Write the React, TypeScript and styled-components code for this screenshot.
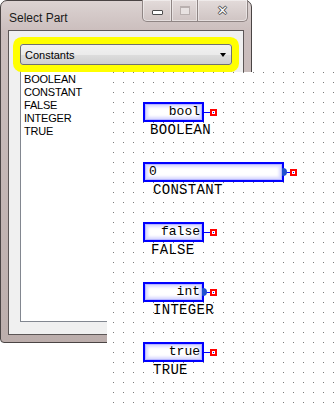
import React from 'react';
import styled, {createGlobalStyle} from "styled-components";

const GlobalStyle = createGlobalStyle`
    html, body {
        margin: 0;
        padding: 0;
        background: #ffffff;
    }
`;

type PartProps = {
    value: string;
    label: string;
    width: number;
    align: "left" | "right";
    labelOffset: number;
    blob?: boolean;
};

const parts: PartProps[] = [
    {value: "bool", label: "BOOLEAN", width: 61, align: "right", labelOffset: 7},
    {value: "0", label: "CONSTANT", width: 141, align: "left", labelOffset: 10, blob: true},
    {value: "false", label: "FALSE", width: 61, align: "right", labelOffset: 8},
    {value: "int", label: "INTEGER", width: 61, align: "right", labelOffset: 10, blob: true},
    {value: "true", label: "TRUE", width: 61, align: "right", labelOffset: 10},
];

const listItems = ["BOOLEAN", "CONSTANT", "FALSE", "INTEGER", "TRUE"];

export default function App() {
    return (
        <StyledPage>
            <GlobalStyle/>
            <StyledWindow>
                <StyledTitleBar>
                    <StyledTitle>Select Part</StyledTitle>
                    <StyledCaptionButtons>
                        <StyledCaptionButton width={30}>
                            <StyledMinGlyph/>
                        </StyledCaptionButton>
                        <StyledCaptionButton width={27}>
                            <StyledMaxGlyph/>
                        </StyledCaptionButton>
                        <StyledCaptionButton width={51}>
                            <StyledCloseGlyph>✕</StyledCloseGlyph>
                        </StyledCaptionButton>
                    </StyledCaptionButtons>
                </StyledTitleBar>
                <StyledClient>
                    <StyledCombo>
                        <span>Constants</span>
                        <StyledArrow/>
                    </StyledCombo>
                    <StyledList>
                        {listItems.map(item => <StyledListItem key={item}>{item}</StyledListItem>)}
                    </StyledList>
                </StyledClient>
            </StyledWindow>

            <StyledCanvas>
                {parts.map(p => (
                    <StyledPart key={p.label}>
                        <StyledPartRow>
                            <StyledPartBox width={p.width} align={p.align}>{p.value}</StyledPartBox>
                            <StyledWire>
                                {p.blob && <StyledBlob/>}
                            </StyledWire>
                            <StyledPin/>
                        </StyledPartRow>
                        <StyledPartLabel offset={p.labelOffset}>{p.label}</StyledPartLabel>
                    </StyledPart>
                ))}
            </StyledCanvas>
        </StyledPage>
    );
}

const StyledPage = styled.div`
    position: relative;
    width: 334px;
    height: 403px;
    overflow: hidden;
    background: #ffffff;
`;

const StyledWindow = styled.div`
    box-sizing: border-box;
    width: 252px;
    height: 343px;
    border: 1px solid #4a4444;
    border-radius: 7px 7px 4px 4px;
    background: linear-gradient(180deg, #dcd3d2 0px, #cbbebd 30px, #bcaeac 100%);
    display: flex;
    flex-direction: column;
    padding: 0 7px 7px 7px;
`;

const StyledTitleBar = styled.div`
    height: 29px;
    display: flex;
    align-items: flex-start;
    justify-content: space-between;
`;

const StyledTitle = styled.div`
    font-family: "Liberation Sans", Arial, sans-serif;
    font-size: 12px;
    color: #1a1a1a;
    padding-top: 10px;
    padding-left: 1px;
`;

const StyledCaptionButtons = styled.div`
    display: flex;
    margin-right: -4px;
    margin-top: -1px;
`;

const StyledCaptionButton = styled.div<{ width: number }>`
    box-sizing: border-box;
    width: ${p => p.width}px;
    height: 22px;
    border: 1px solid #8f8584;
    border-top: none;
    margin-left: -1px;
    background: linear-gradient(180deg, #e3dbda 0%, #cfc4c3 100%);
    box-shadow: inset 0 0 0 1px rgba(255, 255, 255, 0.45);
    display: flex;
    align-items: center;
    justify-content: center;

    &:first-child {
        border-bottom-left-radius: 5px;
    }

    &:last-child {
        border-bottom-right-radius: 5px;
    }
`;

const StyledMinGlyph = styled.div`
    width: 9px;
    height: 3px;
    margin-top: 3px;
    background: #ffffff;
    border: 1px solid #4d4d4d;
    border-radius: 1px;
`;

const StyledMaxGlyph = styled.div`
    width: 8px;
    height: 6px;
    border: 1px solid #b9b0af;
    border-top-width: 2px;
    background: #e8e2e1;
`;

const StyledCloseGlyph = styled.div`
    font-family: "DejaVu Sans", sans-serif;
    font-size: 13px;
    font-weight: bold;
    color: #ffffff;
    line-height: 1;
    text-shadow: 1px 0 0 #4d4d4d, -1px 0 0 #4d4d4d, 0 1px 0 #4d4d4d, 0 -1px 0 #4d4d4d;
`;

const StyledClient = styled.div`
    flex: 1;
    border: 1px solid #5c5656;
    background: #f0f0f0;
    padding: 13px 11px 12px 11px;
    display: flex;
    flex-direction: column;
`;

const StyledCombo = styled.div`
    position: relative;
    z-index: 1;
    height: 21px;
    box-sizing: border-box;
    border: 1px solid #707070;
    border-radius: 3px;
    background: linear-gradient(180deg, #f2f2f2 0%, #ebebeb 50%, #dddddd 51%, #cfcfcf 100%);
    box-shadow: 0 0 0 7px #ffff00;
    display: flex;
    align-items: center;
    justify-content: space-between;
    padding: 0 5px 0 4px;
    font-family: "Liberation Sans", Arial, sans-serif;
    font-size: 11px;
    color: #000000;
`;

const StyledArrow = styled.div`
    width: 0;
    height: 0;
    border-left: 3.5px solid transparent;
    border-right: 3.5px solid transparent;
    border-top: 4px solid #000000;
`;

const StyledList = styled.div`
    flex: 1;
    margin-top: 1px;
    border: 1px solid #828790;
    background: #ffffff;
    padding: 6px 3px;
    display: flex;
    flex-direction: column;
`;

const StyledListItem = styled.div`
    font-family: "Liberation Sans", Arial, sans-serif;
    font-size: 11px;
    line-height: 13px;
    letter-spacing: -0.2px;
    color: #000000;
`;

const StyledCanvas = styled.div`
    position: absolute;
    left: 107px;
    top: 72px;
    width: 227px;
    height: 331px;
    background-color: #ffffff;
    background-image: conic-gradient(at 1px 1px, transparent 75%, #7a7a7a 0);
    background-size: 10px 10px;
    background-position: 6px 10px;
    padding: 30px 0 0 36px;
    box-sizing: border-box;
    display: flex;
    flex-direction: column;
`;

const StyledPart = styled.div`
    height: 60px;
    display: flex;
    flex-direction: column;
    align-items: flex-start;
`;

const StyledPartRow = styled.div`
    display: flex;
    align-items: center;
`;

const StyledPartBox = styled.div<{ width: number; align: "left" | "right" }>`
    box-sizing: border-box;
    width: ${p => p.width}px;
    height: 20px;
    border: 2px solid #0000ff;
    background: #ffffff;
    box-shadow: inset 0 0 0 1px #b8b8ff, inset 0 0 3px 3px #d8d8ff;
    font-family: "Liberation Mono", "Courier New", monospace;
    font-size: 13px;
    line-height: 16px;
    color: #000000;
    text-align: ${p => p.align};
    padding: 0 2px 0 4px;
`;

const StyledWire = styled.div`
    position: relative;
    width: 6px;
    height: 1px;
    background: #0000ff;
`;

const StyledBlob = styled.div`
    position: absolute;
    left: -2px;
    top: -4px;
    width: 5px;
    height: 8px;
    border-radius: 1px 4px 4px 1px;
    background: #1f4fd0;
`;

const StyledPin = styled.div`
    box-sizing: border-box;
    width: 7px;
    height: 7px;
    border: 2px solid #ff0000;
    background: #ffffff;
    display: flex;
    align-items: center;
    justify-content: center;

    &::after {
        content: "";
        width: 1px;
        height: 1px;
        background: #0000ff;
    }
`;

const StyledPartLabel = styled.div<{ offset: number }>`
    font-family: "Liberation Mono", "Courier New", monospace;
    font-size: 14px;
    line-height: 14px;
    letter-spacing: 0.3px;
    color: #000000;
    margin-left: ${p => p.offset}px;
    margin-top: 1px;
`;
